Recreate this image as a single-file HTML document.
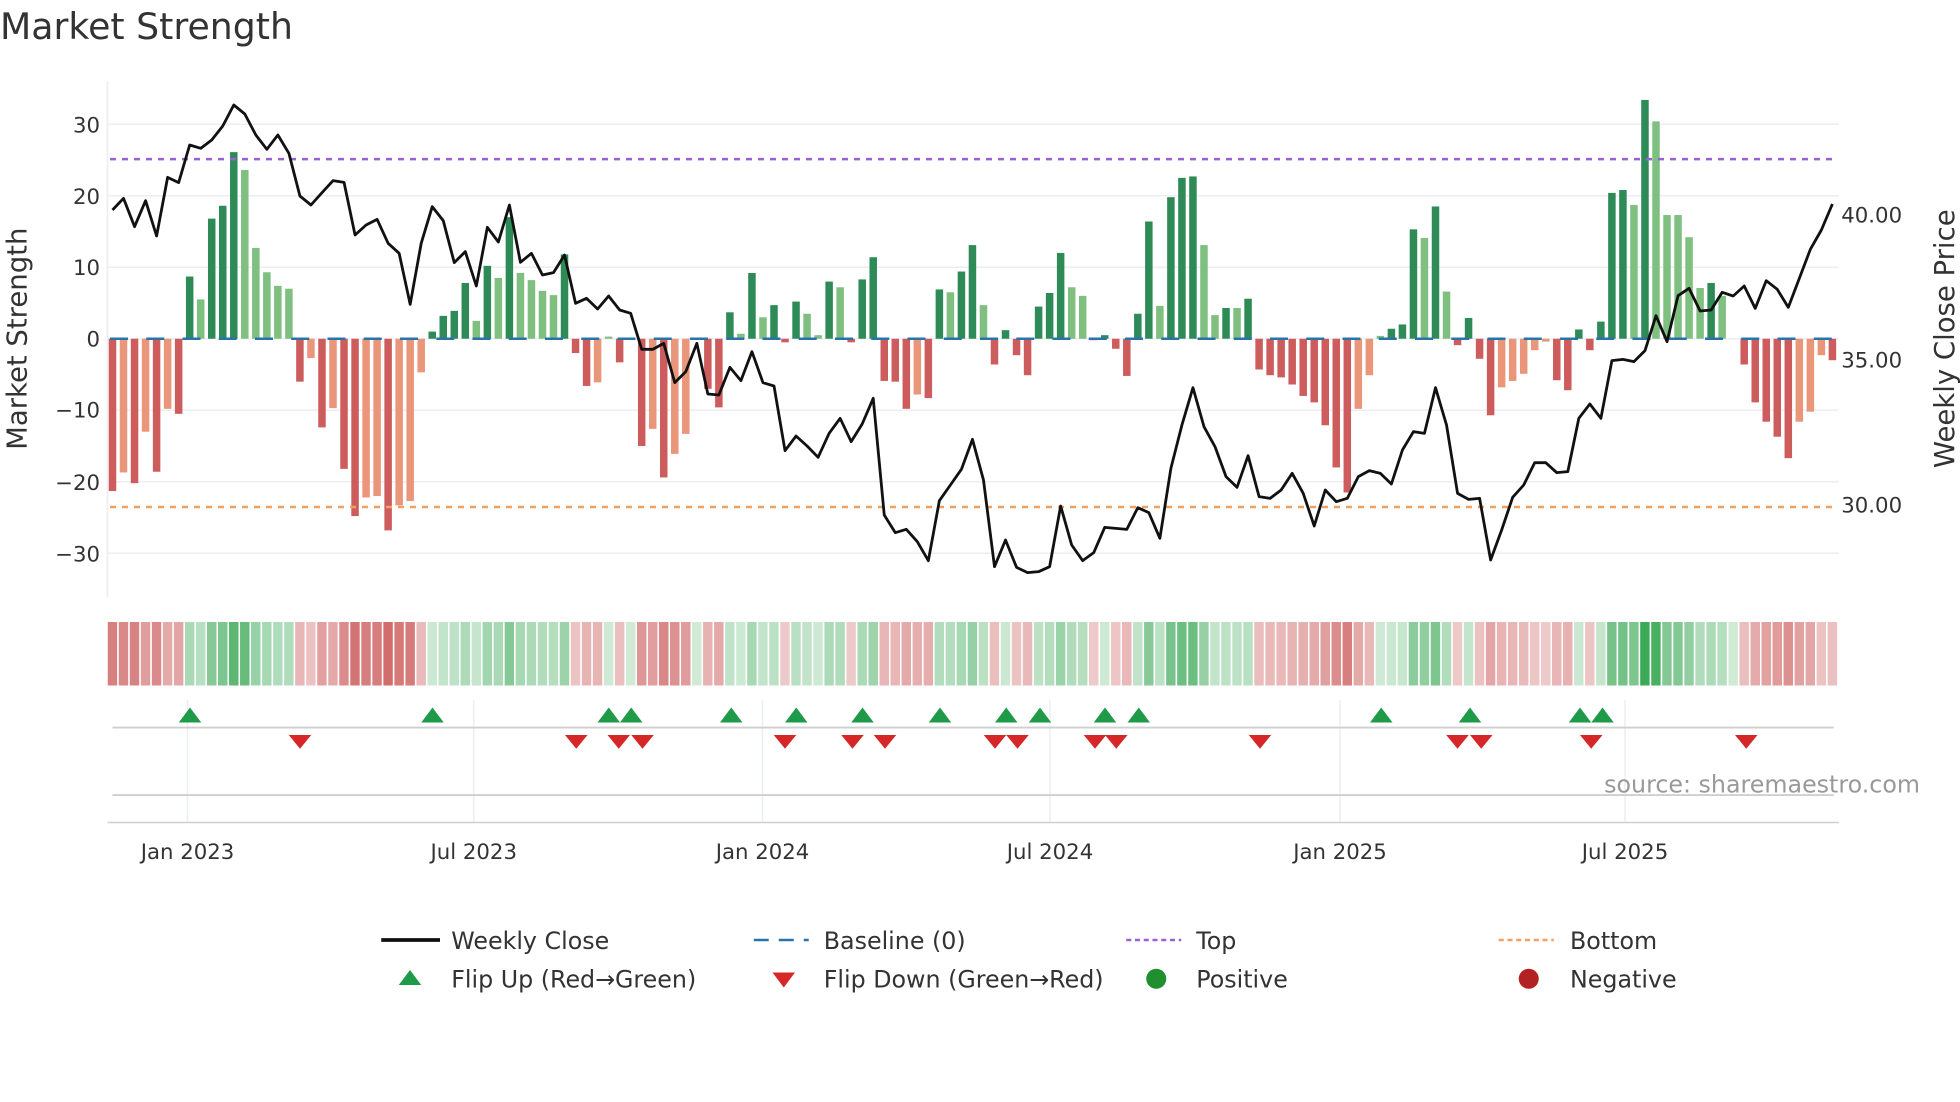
<!DOCTYPE html>
<html><head><meta charset="utf-8"><style>
html,body{margin:0;padding:0;background:#fff;}
svg{display:block;font-family:"DejaVu Sans","Liberation Sans",sans-serif;}
</style></head><body>
<svg id="s" width="1960" height="1102" viewBox="0 0 1568 881.6" preserveAspectRatio="none" xmlns="http://www.w3.org/2000/svg">
<rect width="1568" height="882" fill="#fff"/>
<text x="0" y="31" font-size="29" fill="#333">Market Strength</text>
<g id="grid" stroke="#eceef4" stroke-width="1.2"></g>
<line x1="86" y1="65" x2="86" y2="478" stroke="#eceef4" stroke-width="1.2"/>
<g id="bars"></g>
<line x1="88" y1="127.3" x2="1470" y2="127.3" stroke="#9b5fd6" stroke-width="2" stroke-dasharray="4.8,4.8"/>
<line x1="88" y1="405.6" x2="1470" y2="405.6" stroke="#f0a060" stroke-width="2" stroke-dasharray="4.8,4.8"/>
<line x1="88" y1="271" x2="1470" y2="271" stroke="#2a73a8" stroke-width="2" stroke-dasharray="14.4,14.6"/>
<g transform="translate(90,72) scale(8.82,0.266667)"><polyline id="pl" fill="none" stroke="#111" stroke-width="2.8" vector-effect="non-scaling-stroke" stroke-linejoin="round"/></g>
<g font-size="17" fill="#333" text-anchor="end">
<text x="80" y="106">30</text><text x="80" y="163">20</text><text x="80" y="220">10</text><text x="80" y="277">0</text>
<text x="80" y="334">−10</text><text x="80" y="392">−20</text><text x="80" y="449">−30</text></g>
<g font-size="17" fill="#333"><text x="1473" y="178">40.00</text><text x="1473" y="294">35.00</text><text x="1473" y="410">30.00</text></g>
<text transform="translate(21,271) rotate(-90)" font-size="22" fill="#333" text-anchor="middle">Market Strength</text>
<text transform="translate(1563,271) rotate(-90)" font-size="22" fill="#333" text-anchor="middle">Weekly Close Price</text>
<g id="heat"></g>
<g stroke="#eceef4" stroke-width="1.2">
<line x1="150" y1="560" x2="150" y2="658"/><line x1="379" y1="560" x2="379" y2="658"/><line x1="610" y1="560" x2="610" y2="658"/><line x1="840" y1="560" x2="840" y2="658"/><line x1="1072" y1="560" x2="1072" y2="658"/><line x1="1300" y1="560" x2="1300" y2="658"/></g>
<line x1="90" y1="582" x2="1467" y2="582" stroke="#cfcfcf" stroke-width="1.5"/>
<line x1="90" y1="636" x2="1467" y2="636" stroke="#cfcfcf" stroke-width="1.5"/>
<line x1="86" y1="658" x2="1471" y2="658" stroke="#cfcfcf" stroke-width="1.2"/>
<g id="flips"></g>
<text x="1536" y="634" font-size="19" fill="#999" text-anchor="end">source: sharemaestro.com</text>
<g font-size="17" fill="#333" text-anchor="middle">
<text x="150" y="687">Jan 2023</text><text x="379" y="687">Jul 2023</text><text x="610" y="687">Jan 2024</text><text x="840" y="687">Jul 2024</text><text x="1072" y="687">Jan 2025</text><text x="1300" y="687">Jul 2025</text></g>
<g font-size="19" fill="#333">
<line x1="305" y1="752" x2="352" y2="752" stroke="#111" stroke-width="3"/><text x="361" y="759">Weekly Close</text>
<line x1="603" y1="752" x2="647" y2="752" stroke="#2a73a8" stroke-width="2" stroke-dasharray="12,8"/><text x="659" y="759">Baseline (0)</text>
<line x1="901" y1="752" x2="945" y2="752" stroke="#9b5fd6" stroke-width="2" stroke-dasharray="4,3"/><text x="957" y="759">Top</text>
<line x1="1199" y1="752" x2="1243" y2="752" stroke="#f0a060" stroke-width="2" stroke-dasharray="4,3"/><text x="1256" y="759">Bottom</text>
<polygon points="319,788 328,776 337,788" fill="#1f9a48"/><text x="361" y="790">Flip Up (Red→Green)</text>
<polygon points="618,778 636,778 627,790" fill="#d62728"/><text x="659" y="790">Flip Down (Green→Red)</text>
<circle cx="925" cy="783" r="8" fill="#1f8f2f"/><text x="957" y="790">Positive</text>
<circle cx="1223" cy="783" r="8" fill="#b22222"/><text x="1256" y="790">Negative</text>
</g>
</svg>
<script>
var NS="http://www.w3.org/2000/svg";
function el(t,a,p){var e=document.createElementNS(NS,t);for(var k in a)e.setAttribute(k,a[k]);document.getElementById(p).appendChild(e);return e;}
var D="R-21.3 O-18.7 R-20.2 O-13 R-18.6 O-9.8 R-10.5 D8.7 L5.5 D16.8 D18.6 D26.1 L23.6 L12.7 L9.3 L7.4 L7 R-6 O-2.7 R-12.4 O-9.7 R-18.2 R-24.8 O-22.2 O-22 R-26.8 O-23.3 O-22.7 O-4.7 D1 D3.2 D3.9 D7.8 L2.5 D10.2 L8.5 D17 L9.2 L8.2 L6.7 L6.1 D11.8 R-2 R-6.6 O-6.1 L0.3 R-3.3 O0 R-15 O-12.6 R-19.4 O-16.1 O-13.3 O0 R-7 R-9.6 D3.7 L0.7 D9.2 L3 D4.7 R-0.5 D5.2 L3.5 L0.5 D8 L7.2 R-0.5 D8.3 D11.4 R-5.9 R-6 R-9.8 O-7.8 R-8.3 D6.9 L6.5 D9.4 D13.1 L4.7 R-3.6 D1.2 R-2.3 R-5.1 D4.5 D6.4 D12 L7.2 L6 R-0.2 D0.5 R-1.4 R-5.2 D3.5 D16.4 L4.6 D19.8 D22.5 D22.7 L13.1 L3.3 D4.3 L4.3 D5.6 R-4.3 R-5.1 R-5.4 R-6.4 R-8 R-8.9 R-12.1 R-18 R-21.5 O-9.8 O-5.1 L0.4 D1.4 D2 D15.3 L14.1 D18.5 L6.6 R-0.9 D2.9 R-2.8 R-10.7 O-6.8 O-5.9 O-4.9 O-1.6 O-0.4 R-5.8 R-7.2 D1.3 R-1.6 D2.4 D20.4 D20.8 L18.7 D33.4 L30.4 L17.3 L17.3 L14.2 L7.1 D7.8 L6 L0 R-3.6 R-8.9 R-11.6 R-13.7 R-16.7 O-11.6 O-10.2 O-2.3 R-3".split(" ");
var C={D:"#2e8b57",L:"#7fbf7f",R:"#cd5c5c",O:"#e9967a"};
[30,20,10,0,-10,-20,-30].forEach(function(v){var y=271-5.72*v;el("line",{x1:86,y1:y,x2:1471,y2:y},"grid");});
D.forEach(function(s,i){var c=s[0],v=parseFloat(s.slice(1)),x=90+8.82*i,y0=271,y1=271-5.72*v;
 if(Math.abs(v)>0.05)el("rect",{x:x-3,y:Math.min(y0,y1),width:6,height:Math.abs(y1-y0),fill:C[c]},"bars");
 var a=0.22+0.7*Math.min(1,Math.abs(v)/34);var col=v>=0?"rgba(40,160,70,"+a+")":"rgba(200,80,80,"+(0.3+0.6*Math.min(1,Math.abs(v)/30))+")";
 el("rect",{x:x-4.41,y:497,width:8.82,height:52,fill:col,stroke:"#fff","stroke-width":1.2},"heat");});
var P=[360,325,410,332,438,262,278,165,175,150,108,45,72,135,178,135,190,318,345,308,272,277,435,405,388,460,490,643,460,350,392,518,485,588,412,456,345,517,490,555,548,495,640,625,657,618,660,670,778,778,760,878,845,760,912,915,832,872,785,878,888,1082,1038,1068,1102,1030,985,1055,1002,925,1275,1328,1318,1355,1412,1232,1185,1138,1048,1170,1430,1350,1432,1448,1445,1430,1248,1365,1412,1388,1312,1315,1318,1253,1268,1345,1135,1005,893,1010,1070,1160,1192,1097,1220,1225,1200,1150,1210,1308,1200,1235,1225,1160,1142,1150,1182,1080,1025,1030,893,1005,1210,1228,1225,1410,1320,1222,1185,1118,1118,1148,1145,985,942,985,812,808,815,782,677,755,617,595,663,660,607,618,588,655,572,598,652,565,478,420,342];
document.getElementById("pl").setAttribute("points",P.map(function(y,i){return i+","+y;}).join(" "));
[152,346,487,505,585,637,690,752,805,832,884,911,1105,1176,1264,1282].forEach(function(x){el("polygon",{points:(x-9)+",578 "+x+",566 "+(x+9)+",578",fill:"#1f9a48"},"flips");});
[240,461,495,514,628,682,708,796,814,876,893,1008,1166,1185,1273,1397].forEach(function(x){el("polygon",{points:(x-9)+",588 "+(x+9)+",588 "+x+",599",fill:"#d62728"},"flips");});
</script>
</body></html>
